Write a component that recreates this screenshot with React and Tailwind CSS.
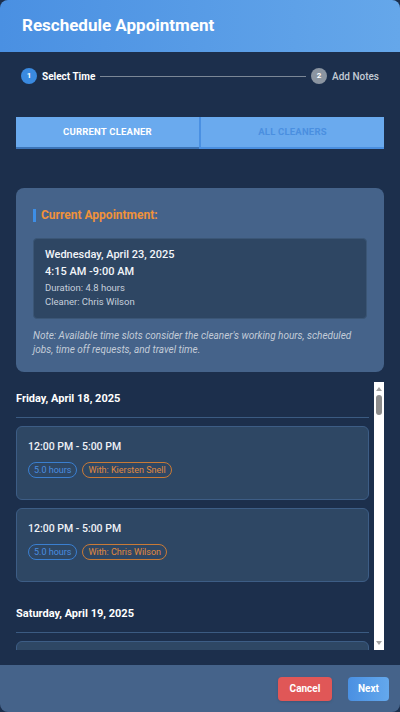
import React, { useState } from 'react';

const days = [
  {
    label: 'Friday, April 18, 2025',
    slots: [
      { time: '12:00 PM - 5:00 PM', hours: '5.0 hours', cleaner: 'Kiersten Snell' },
      { time: '12:00 PM - 5:00 PM', hours: '5.0 hours', cleaner: 'Chris Wilson' },
    ],
  },
  {
    label: 'Saturday, April 19, 2025',
    slots: [
      { time: '12:00 PM - 5:00 PM', hours: '5.0 hours', cleaner: 'Chris Wilson' },
      { time: '1:00 PM - 6:00 PM', hours: '5.0 hours', cleaner: 'Kiersten Snell' },
    ],
  },
];

function Slot({ slot }) {
  return (
    <div className="mt-[8px] first:mt-[9px] h-[74px] rounded-md border border-[#3d5d85] bg-[#2e4764] px-[11px] pt-[12px]">
      <p className="text-[10.5px] leading-[16px] font-medium text-[#eef2f7]">{slot.time}</p>
      <div className="mt-[7px] flex gap-[5px]">
        <span className="h-[16px] rounded-full border border-[#3a7fd0] px-[5px] text-[9px] leading-[14px] text-[#4a8ee0]">
          {slot.hours}
        </span>
        <span className="h-[16px] rounded-full border border-[#c97a36] px-[5px] text-[9px] leading-[14px] text-[#e08a40]">
          With: {slot.cleaner}
        </span>
      </div>
    </div>
  );
}

// drawn scrollbar, the browser hides its own
function ScrollBar() {
  return (
    <div className="flex w-[10px] shrink-0 flex-col items-center bg-white">
      <svg width="8" height="8" viewBox="0 0 8 8" className="mt-[3px]">
        <path d="M1 6 L4 2 L7 6 Z" fill="#a3a3a3" />
      </svg>
      <span className="mt-[2px] h-[20px] w-[6px] rounded-full bg-[#8c8c8c]" />
      <span className="flex-1" />
      <svg width="8" height="8" viewBox="0 0 8 8" className="mb-[3px]">
        <path d="M1 2 L4 6 L7 2 Z" fill="#a3a3a3" />
      </svg>
    </div>
  );
}

export default function App() {
  const [tab, setTab] = useState('current');

  return (
    <div className="min-h-[712px] bg-[#1c2f4c] font-['Roboto',sans-serif]">
      <div className="flex h-[712px] flex-col overflow-hidden rounded-lg bg-[#1c2f4c]">
        {/* Header */}
        <div className="flex h-[52px] shrink-0 items-center bg-gradient-to-r from-[#4a90e2] to-[#65a7ea] px-[22px]">
          <h1 className="text-[17px] font-bold text-white">Reschedule Appointment</h1>
        </div>

        <div className="flex-1 px-[16px]">
          {/* Stepper */}
          <div className="mt-[16px] flex items-center px-[5px]">
            <span className="flex h-[16px] w-[16px] items-center justify-center rounded-full bg-[#3a8ae0] text-[8px] font-bold text-white">1</span>
            <span className="ml-[5px] text-[10px] font-bold text-white">Select Time</span>
            <span className="mx-[5px] h-px flex-1 bg-[#7b8796]" />
            <span className="flex h-[16px] w-[16px] items-center justify-center rounded-full bg-[#8b95a1] text-[8px] font-bold text-white">2</span>
            <span className="ml-[5px] text-[10px] font-medium text-[#c3cbd4]">Add Notes</span>
          </div>

          {/* Tabs */}
          <div className="mt-[33px] flex h-[32px] bg-[#6aaaee]">
            <button
              onClick={() => setTab('current')}
              className="flex-1 border-b-2 border-[#3b74b8] text-[9.5px] font-bold uppercase tracking-[0.2px] text-white"
            >
              Current Cleaner
            </button>
            <span className="w-[2px] bg-[#4a90e2]" />
            <button
              onClick={() => setTab('all')}
              className="flex-1 border-b-2 border-[#4a8fe0] text-[9.5px] font-bold uppercase tracking-[0.2px] text-[#4a8fe0]"
            >
              All Cleaners
            </button>
          </div>

          {/* Current appointment */}
          <div className="mt-[39px] h-[184px] rounded-lg bg-[#45638a] px-[17px] pt-[19px]">
            <div className="flex items-center">
              <span className="h-[13px] w-[3px] bg-[#3d8ee6]" />
              <h2 className="ml-[5px] text-[12px] leading-[16px] font-bold text-[#f0923a]">Current Appointment:</h2>
            </div>
            <div className="mt-[15px] h-[81px] rounded-sm border border-[#3b5676] bg-[#2e4663] px-[11px] pt-[8px]">
              <p className="text-[11px] leading-[16px] font-medium text-[#f2f5f9]">Wednesday, April 23, 2025</p>
              <p className="mt-[1px] text-[11px] leading-[16px] font-medium text-[#f2f5f9]">4:15 AM -9:00 AM</p>
              <p className="text-[9.5px] leading-[15px] text-[#c6d0dc]">Duration: 4.8 hours</p>
              <p className="text-[9.5px] leading-[13px] text-[#c6d0dc]">Cleaner: Chris Wilson</p>
            </div>
            <p className="mt-[10px] pr-[10px] text-[10px] leading-[13.5px] italic text-[#c3ccd8]">
              Note: Available time slots consider the cleaner's working hours, scheduled jobs, time off requests, and travel time.
            </p>
          </div>

          {/* Slots */}
          <div className="mt-[10px] flex h-[268px] gap-[5px]">
            <div className="flex-1 overflow-hidden">
              {days.map(day => (
                <div key={day.label} className="mb-[15px]">
                  <div className="border-b border-[#3b5b82] pt-[10px] pb-[11px]">
                    <p className="text-[11px] leading-[14px] font-bold text-white">{day.label}</p>
                  </div>
                  {day.slots.map((slot, i) => (
                    <Slot key={i} slot={slot} />
                  ))}
                </div>
              ))}
            </div>
            <ScrollBar />
          </div>
        </div>

        {/* Footer */}
        <div className="mt-[15px] flex h-[47px] shrink-0 items-center justify-end gap-[16px] bg-[#45638a] pr-[11px]">
          <button className="h-[24px] w-[54px] rounded-sm bg-[#e05757] text-[10px] font-bold text-white shadow">Cancel</button>
          <button className="h-[24px] w-[41px] rounded-sm bg-gradient-to-r from-[#4a90e2] to-[#64a8ec] text-[10px] font-bold text-white">Next</button>
        </div>
      </div>
    </div>
  );
}
